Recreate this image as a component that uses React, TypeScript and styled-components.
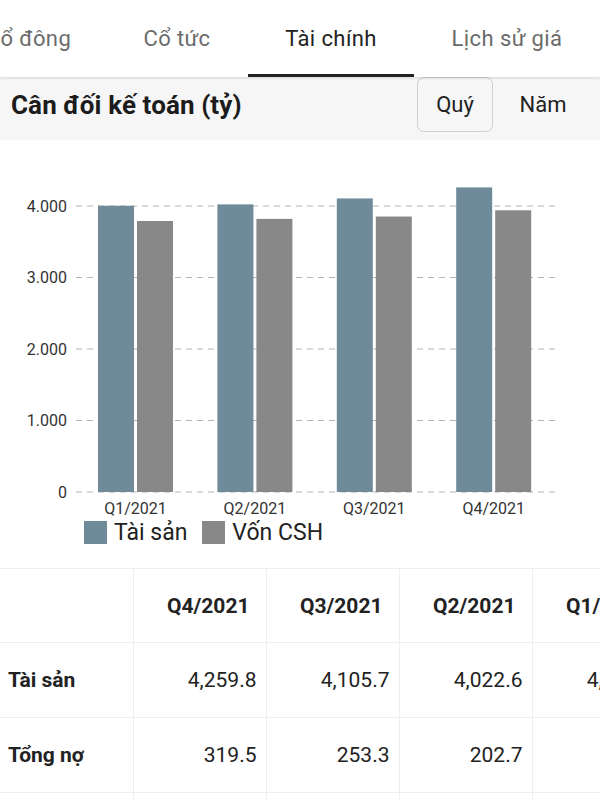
import React from 'react'
import styled, { createGlobalStyle } from 'styled-components'

const GlobalStyle = createGlobalStyle`
  body {
    margin: 0;
    background: #ffffff;
    font-family: Roboto, 'Noto Sans', sans-serif;
    color: #222222;
  }
`

const colors = {
  asset: '#6f8b99',
  equity: '#888888',
  grid: '#b4b4b4',
  line: '#eeeeee',
  headerBg: '#f6f6f6',
}

const tabs = [
  { label: 'Cổ đông', width: 155 },
  { label: 'Cổ tức', width: 142 },
  { label: 'Tài chính', width: 166, active: true },
  { label: 'Lịch sử giá', width: 186 },
]

const quarters = [
  { name: 'Q1/2021', asset: 4003.5, equity: 3790.4, debt: 213.1 },
  { name: 'Q2/2021', asset: 4022.6, equity: 3819.9, debt: 202.7 },
  { name: 'Q3/2021', asset: 4105.7, equity: 3852.4, debt: 253.3 },
  { name: 'Q4/2021', asset: 4259.8, equity: 3940.3, debt: 319.5 },
]

const fmt = (n: number) => n.toLocaleString('en-US', { minimumFractionDigits: 1, maximumFractionDigits: 1 })

const Page = styled.div`
  width: 600px;
  height: 800px;
  overflow: hidden;
  background: #ffffff;
`

const TabBar = styled.div`
  position: relative;
  z-index: 1;
  height: 77px;
  overflow: hidden;
  background: #ffffff;
  box-shadow: 0 1px 3px rgba(0, 0, 0, 0.14);
`

const TabRow = styled.div`
  display: flex;
  height: 100%;
  margin-left: -49px;
`

const Tab = styled.div<{ $active?: boolean; $width: number }>`
  flex: none;
  width: ${(p) => p.$width}px;
  display: flex;
  align-items: center;
  justify-content: center;
  box-sizing: border-box;
  font-size: 22px;
  letter-spacing: 0.4px;
  white-space: nowrap;
  color: ${(p) => (p.$active ? '#222222' : '#6b6b6b')};
  border-bottom: 3px solid ${(p) => (p.$active ? '#222222' : 'transparent')};
  padding-top: 2px;
`

const Header = styled.div`
  display: flex;
  align-items: center;
  justify-content: space-between;
  height: 55px;
  padding: 0 19px 8px 11px;
  background: ${colors.headerBg};
`

const Title = styled.h2`
  margin: 0;
  font-size: 26px;
  font-weight: 700;
  color: #1c1c1c;
  letter-spacing: 0.1px;
`

const Periods = styled.div`
  display: flex;
  gap: 12px;
  height: 100%;
`

const PeriodButton = styled.div<{ $selected?: boolean }>`
  width: 76px;
  display: flex;
  align-items: center;
  justify-content: center;
  box-sizing: border-box;
  font-size: 22px;
  color: #222222;
  border: 1.5px solid ${(p) => (p.$selected ? '#cfcfcf' : 'transparent')};
  border-radius: 7px;
`

const ChartSvg = styled.svg`
  display: block;
  font-family: Roboto, sans-serif;
`

const Legend = styled.div`
  display: flex;
  align-items: center;
  height: 25px;
  padding-left: 84px;
`

const LegendItem = styled.div`
  display: flex;
  align-items: center;
  margin-right: 15px;
  font-size: 23px;
  color: #222222;
`

const Swatch = styled.span<{ $color: string }>`
  width: 23px;
  height: 23px;
  margin-right: 7px;
  background: ${(p) => p.$color};
`

const TableWrap = styled.div`
  margin-top: 23px;
  overflow: hidden;
`

const Table = styled.table`
  border-collapse: collapse;
  table-layout: fixed;
  width: 798px;
  font-size: 21px;
`

const Th = styled.th<{ $first?: boolean }>`
  box-sizing: border-box;
  width: 133px;
  height: 74px;
  padding: 0 16px 0 8px;
  text-align: right;
  font-weight: 700;
  border: 1px solid ${colors.line};
  border-left: ${(p) => (p.$first ? 'none' : `1px solid ${colors.line}`)};
  white-space: nowrap;
`

const Label = styled.td`
  box-sizing: border-box;
  height: 75px;
  padding: 0 8px;
  font-weight: 700;
  text-align: left;
  border: 1px solid ${colors.line};
  border-left: none;
  white-space: nowrap;
`

const Value = styled.td`
  box-sizing: border-box;
  height: 75px;
  padding: 0 9px 0 8px;
  text-align: right;
  border: 1px solid ${colors.line};
  white-space: nowrap;
`

const BalanceChart: React.FunctionComponent = () => {
  const base = 352
  const step = 71.5
  const y = (v: number) => base - (v / 1000) * step
  return (
    <ChartSvg width={600} height={380} viewBox="0 0 600 380">
      {[0, 1, 2, 3, 4].map((i) => (
        <g key={i}>
          <line x1={76} x2={559} y1={y(i * 1000)} y2={y(i * 1000)} stroke={colors.grid} strokeWidth={1} strokeDasharray="6 5" />
          <text x={67} y={y(i * 1000) + 5.5} fontSize={16} fill="#333" textAnchor="end">
            {i === 0 ? '0' : `${i}.000`}
          </text>
        </g>
      ))}
      {quarters.map((q, i) => {
        const x = 98 + i * 119.4
        return (
          <g key={q.name}>
            <rect x={x} y={y(q.asset)} width={36} height={base - y(q.asset)} fill={colors.asset} />
            <rect x={x + 39} y={y(q.equity)} width={36} height={base - y(q.equity)} fill={colors.equity} />
            <text x={x + 37.5} y={374} fontSize={16} fill="#333" textAnchor="middle">
              {q.name}
            </text>
          </g>
        )
      })}
    </ChartSvg>
  )
}

const App: React.FunctionComponent = () => {
  const cols = [...quarters].reverse()
  return (
    <Page>
      <GlobalStyle />
      <TabBar>
        <TabRow>
          {tabs.map((t) => (
            <Tab key={t.label} $width={t.width} $active={t.active}>
              {t.label}
            </Tab>
          ))}
        </TabRow>
      </TabBar>
      <Header>
        <Title>Cân đối kế toán (tỷ)</Title>
        <Periods>
          <PeriodButton $selected>Quý</PeriodButton>
          <PeriodButton>Năm</PeriodButton>
        </Periods>
      </Header>
      <BalanceChart />
      <Legend>
        <LegendItem>
          <Swatch $color={colors.asset} />
          Tài sản
        </LegendItem>
        <LegendItem>
          <Swatch $color={colors.equity} />
          Vốn CSH
        </LegendItem>
      </Legend>
      <TableWrap>
        <Table>
          <colgroup>
            {[0, 1, 2, 3, 4, 5].map((i) => (
              <col key={i} style={{ width: 133 }} />
            ))}
          </colgroup>
          <thead>
            <tr>
              <Th $first />
              {cols.map((q) => (
                <Th key={q.name}>{q.name}</Th>
              ))}
              <Th />
            </tr>
          </thead>
          <tbody>
            <tr>
              <Label>Tài sản</Label>
              {cols.map((q) => (
                <Value key={q.name}>{fmt(q.asset)}</Value>
              ))}
              <Value />
            </tr>
            <tr>
              <Label>Tổng nợ</Label>
              {cols.map((q) => (
                <Value key={q.name}>{fmt(q.debt)}</Value>
              ))}
              <Value />
            </tr>
            <tr>
              <Label>Vốn CSH</Label>
              {cols.map((q) => (
                <Value key={q.name}>{fmt(q.equity)}</Value>
              ))}
              <Value />
            </tr>
          </tbody>
        </Table>
      </TableWrap>
    </Page>
  )
}

export default App
